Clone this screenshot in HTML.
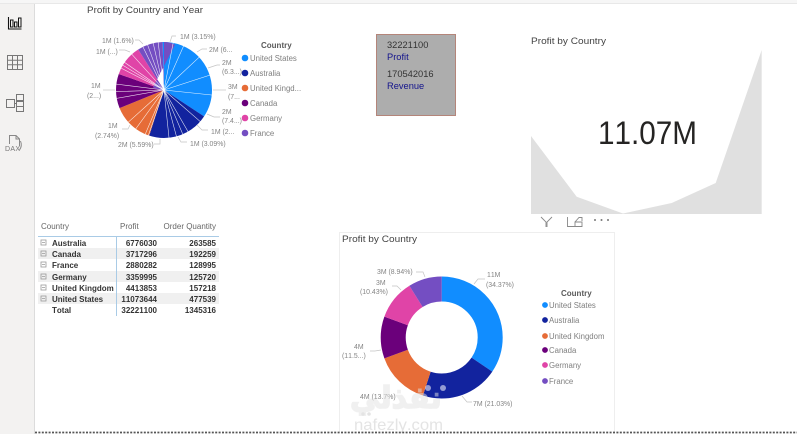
<!DOCTYPE html>
<html><head><meta charset="utf-8"><style>
html,body{margin:0;padding:0;background:#fff;width:797px;height:434px;overflow:hidden}
svg{display:block;font-family:"Liberation Sans","Noto Sans CJK SC",sans-serif;filter:blur(.3px);font-kerning:none}
.lb{font-size:6.9px;fill:#858585}
.lg{font-size:7.8px;fill:#808080}
.lh{font-size:8px;fill:#5a5a5a;font-weight:bold}
.th{font-size:8px;fill:#666}
.tb{font-size:8px;fill:#333;font-weight:bold}
.ld{stroke:#c4c4c4;stroke-width:.7;fill:none}
.ic{stroke:#666;stroke-width:1;fill:none}
.w{stroke:#fff;stroke-width:.55;stroke-opacity:.9}
</style></head><body>
<svg width="797" height="434" viewBox="0 0 797 434" xmlns="http://www.w3.org/2000/svg">
<rect width="797" height="434" fill="#fff"/>
<rect x="0" y="0" width="34" height="434" fill="#f3f2f1"/>
<rect x="34" y="0" width="1" height="434" fill="#dcdcdc"/>
<rect x="0" y="0" width="797" height="3" fill="#f6f6f6"/>
<rect x="0" y="3" width="797" height="1" fill="#e8e8e8"/>

<!-- sidebar icons -->
<g class="ic">
<path d="M8.5 17V29H21.5" stroke="#111" stroke-width="1.1"/>
<rect x="10.5" y="20" width="2.5" height="7" stroke="#111"/><rect x="14.5" y="22" width="2.5" height="5" stroke="#111"/><rect x="18.5" y="18" width="2.5" height="9" stroke="#111"/>
<rect x="7.5" y="55.5" width="15" height="14" stroke="#777"/><path d="M7.5 60.2H22.5M7.5 64.8H22.5M12.5 55.5V69.5M17.5 55.5V69.5" stroke="#777"/>
<rect x="6.5" y="99.5" width="8" height="8" stroke="#777"/><rect x="16.5" y="94.5" width="7" height="6" stroke="#777"/><rect x="16.5" y="101.5" width="7" height="5" stroke="#777"/><rect x="16.5" y="106.5" width="7" height="5" stroke="#777"/><path d="M14.5 103.5H16.5" stroke="#777"/>
<path d="M9.5 144V135.5H16L19.5 139V146" stroke="#888"/><path d="M16 135.5V139H19.5" stroke="#888"/><path d="M20.5 141Q22.5 146 19.5 150" stroke="#888"/>
</g>
<text x="5" y="151" font-size="7" fill="#777" textLength="15">DAX</text>

<!-- pie -->
<text x="87" y="13" font-size="9.5" fill="#444" textLength="116" lengthAdjust="spacingAndGlyphs">Profit by Country and Year</text>
<g transform="translate(164 90) rotate(-90)" fill="none" stroke-width="48">
<circle r="24" pathLength="360" stroke="#118dff" stroke-dasharray="124 236"/>
<circle r="24" pathLength="360" stroke="#12239e" stroke-dasharray="75 285" stroke-dashoffset="-124"/>
<circle r="24" pathLength="360" stroke="#e66c37" stroke-dasharray="50 310" stroke-dashoffset="-199"/>
<circle r="24" pathLength="360" stroke="#6b007b" stroke-dasharray="42 318" stroke-dashoffset="-249"/>
<circle r="24" pathLength="360" stroke="#e044a7" stroke-dasharray="38 322" stroke-dashoffset="-291"/>
<circle r="24" pathLength="360" stroke="#744ec2" stroke-dasharray="31 329" stroke-dashoffset="-329"/>
</g>
<g transform="translate(164 90)" class="w">
<line y2="-49" transform="rotate(11)"/><line y2="-49" transform="rotate(24)"/><line y2="-49" transform="rotate(47)"/><line y2="-49" transform="rotate(72)"/><line y2="-49" transform="rotate(96)"/>
<line y2="-49" transform="rotate(131)"/><line y2="-49" transform="rotate(150)"/><line y2="-49" transform="rotate(157)"/><line y2="-49" transform="rotate(165)"/><line y2="-49" transform="rotate(174)"/>
<line y2="-49" transform="rotate(199)"/><line y2="-49" transform="rotate(203)"/><line y2="-49" transform="rotate(216)"/><line y2="-49" transform="rotate(228)"/>
<line y2="-49" transform="rotate(260)"/><line y2="-49" transform="rotate(268)"/><line y2="-49" transform="rotate(277)"/>
<line y2="-49" transform="rotate(297)"/><line y2="-49" transform="rotate(301)"/><line y2="-49" transform="rotate(305)"/><line y2="-49" transform="rotate(318)"/>
<line y2="-49" transform="rotate(334)"/><line y2="-49" transform="rotate(340)"/><line y2="-49" transform="rotate(347)"/><line y2="-49" transform="rotate(353)"/>
</g>
<g class="ld">
<path d="M170 42L172 36H176"/><path d="M197 52L202 49H207"/><path d="M208 68L217 65H220"/><path d="M213 90H226"/><path d="M207 114L214 117H220"/><path d="M197 125L202 130H208"/><path d="M178 137L181 142H187"/><path d="M160 139V144H154"/><path d="M130 125L128 129H122"/><path d="M103 90H115"/><path d="M130 52L125 50H119"/><path d="M143 44L139 40H135"/>
</g>
<g class="lb">
<text x="180" y="39">1M (3.15%)</text><text x="209" y="52">2M (6...</text><text x="222" y="65">2M</text><text x="222" y="74">(6.3...)</text>
<text x="228" y="89">3M</text><text x="228" y="99">(7...</text><text x="222" y="114">2M</text><text x="222" y="123">(7.4...)</text><text x="211" y="134">1M (2...</text><text x="190" y="146">1M (3.09%)</text><text x="118" y="147">2M (5.59%)</text>
<text x="108" y="128">1M</text><text x="95" y="138">(2.74%)</text><text x="91" y="88">1M</text><text x="87" y="98">(2...)</text><text x="96" y="54">1M (...)</text><text x="102" y="43">1M (1.6%)</text>
</g>
<text x="261" y="48" class="lh">Country</text>
<g>
<circle cx="245" cy="58" r="3.3" fill="#118dff"/><text x="250" y="61" class="lg">United States</text>
<circle cx="245" cy="73" r="3.3" fill="#12239e"/><text x="250" y="76" class="lg">Australia</text>
<circle cx="245" cy="88" r="3.3" fill="#e66c37"/><text x="250" y="91" class="lg">United Kingd...</text>
<circle cx="245" cy="103" r="3.3" fill="#6b007b"/><text x="250" y="106" class="lg">Canada</text>
<circle cx="245" cy="118" r="3.3" fill="#e044a7"/><text x="250" y="121" class="lg">Germany</text>
<circle cx="245" cy="133" r="3.3" fill="#744ec2"/><text x="250" y="136" class="lg">France</text>
</g>

<!-- card -->
<rect x="376.5" y="34.5" width="79" height="81" fill="#adadad" stroke="#b4857a"/>
<text x="387" y="48" font-size="9.3" fill="#333">32221100</text>
<text x="387" y="60" font-size="9.3" fill="#14148c">Profit</text>
<text x="387" y="77" font-size="9.3" fill="#333">170542016</text>
<text x="387" y="89" font-size="9.3" fill="#14148c">Revenue</text>

<!-- KPI -->
<text x="531" y="44" font-size="9.5" fill="#444" textLength="75" lengthAdjust="spacingAndGlyphs">Profit by Country</text>
<path d="M531 136L576.7 196.7L623 213.5L671.7 203L715.7 183L761.7 50V214H531Z" fill="#e0e0e0"/>
<text x="598" y="144" font-size="32" fill="#252423" textLength="99" lengthAdjust="spacingAndGlyphs">11.07M</text>
<path d="M541 217L546 222V227M552 217L547 222V227" fill="none" stroke="#888" stroke-width=".9"/>
<path d="M567.5 217V226.5H582V222H575V226.5M575 222L579 217.5H582V221" fill="none" stroke="#888" stroke-width=".9"/>
<circle cx="595" cy="220" r="1" fill="#777"/><circle cx="601.5" cy="220" r="1" fill="#777"/><circle cx="608" cy="220" r="1" fill="#777"/>

<!-- table -->
<rect x="38" y="248" width="181" height="11" fill="#f0f0f0"/>
<rect x="38" y="271" width="181" height="11" fill="#f0f0f0"/>
<rect x="38" y="293" width="181" height="11" fill="#f0f0f0"/>
<rect x="38" y="236" width="181" height="1" fill="#a9cbe6"/>
<rect x="116" y="237" width="1" height="79" fill="#a9cbe6"/>
<text x="41" y="229" class="th">Country</text><text x="120" y="229" class="th">Profit</text><text x="216" y="229" class="th" text-anchor="end">Order Quantity</text>
<g fill="none" stroke="#999" stroke-width=".8">
<rect x="41" y="240" width="5" height="5"/><rect x="41" y="251" width="5" height="5"/><rect x="41" y="262" width="5" height="5"/><rect x="41" y="274" width="5" height="5"/><rect x="41" y="285" width="5" height="5"/><rect x="41" y="296" width="5" height="5"/>
<path d="M42 242.5H45M42 253.5H45M42 264.5H45M42 276.5H45M42 287.5H45M42 298.5H45"/>
</g>
<g class="tb">
<text x="52" y="246">Australia</text><text x="52" y="257">Canada</text><text x="52" y="268">France</text><text x="52" y="280">Germany</text><text x="52" y="291">United Kingdom</text><text x="52" y="302">United States</text><text x="52" y="313">Total</text>
</g>
<g class="tb" text-anchor="end">
<text x="157" y="246">6776030</text><text x="157" y="257">3717296</text><text x="157" y="268">2880282</text><text x="157" y="280">3359995</text><text x="157" y="291">4413853</text><text x="157" y="302">11073644</text><text x="157" y="313">32221100</text>
<text x="216" y="246">263585</text><text x="216" y="257">192259</text><text x="216" y="268">128995</text><text x="216" y="280">125720</text><text x="216" y="291">157218</text><text x="216" y="302">477539</text><text x="216" y="313">1345316</text>
</g>

<!-- donut -->
<path d="M339.5 432V232.5H614.5V432" fill="none" stroke="#eeeeee"/>
<text x="342" y="242" font-size="9.5" fill="#444" textLength="75" lengthAdjust="spacingAndGlyphs">Profit by Country</text>
<g transform="translate(441.7 337.5) rotate(-90)" fill="none" stroke-width="25">
<circle r="48.5" pathLength="360" stroke="#118dff" stroke-dasharray="124 236"/>
<circle r="48.5" pathLength="360" stroke="#12239e" stroke-dasharray="74 286" stroke-dashoffset="-124"/>
<circle r="48.5" pathLength="360" stroke="#e66c37" stroke-dasharray="52 308" stroke-dashoffset="-198"/>
<circle r="48.5" pathLength="360" stroke="#6b007b" stroke-dasharray="40 320" stroke-dashoffset="-250"/>
<circle r="48.5" pathLength="360" stroke="#e044a7" stroke-dasharray="38 322" stroke-dashoffset="-290"/>
<circle r="48.5" pathLength="360" stroke="#744ec2" stroke-dasharray="32 328" stroke-dashoffset="-328"/>
</g>
<g class="ld">
<path d="M474 284L478 279H485"/><path d="M462 396L467 402H472"/><path d="M381 350L375 351H370"/><path d="M401 290L397 286H392"/><path d="M425 277L423 272H416"/>
</g>
<g class="lb">
<text x="487" y="277">11M</text><text x="486" y="287">(34.37%)</text><text x="473" y="406">7M (21.03%)</text><text x="354" y="349">4M</text><text x="342" y="358">(11.5...)</text>
<text x="376" y="285">3M</text><text x="360" y="294">(10.43%)</text><text x="377" y="274">3M (8.94%)</text><text x="360" y="399">4M (13.7%)</text>
</g>
<text x="561" y="296" class="lh">Country</text>
<g>
<circle cx="545" cy="305" r="2.9" fill="#118dff"/><text x="549" y="308" class="lg">United States</text>
<circle cx="545" cy="320" r="2.9" fill="#12239e"/><text x="549" y="323" class="lg">Australia</text>
<circle cx="545" cy="336" r="2.9" fill="#e66c37"/><text x="549" y="339" class="lg">United Kingdom</text>
<circle cx="545" cy="350" r="2.9" fill="#6b007b"/><text x="549" y="353" class="lg">Canada</text>
<circle cx="545" cy="365" r="2.9" fill="#e044a7"/><text x="549" y="368" class="lg">Germany</text>
<circle cx="545" cy="381" r="2.9" fill="#744ec2"/><text x="549" y="384" class="lg">France</text>
</g>

<!-- watermark -->
<text x="350" y="408" font-size="30" font-weight="bold" fill="#e2e2e2" stroke="#e2e2e2" stroke-width="1.5" opacity=".5" font-family="'DejaVu Sans',sans-serif">نفذلي</text>
<circle cx="428" cy="388" r="3" fill="#fff" opacity=".55"/><circle cx="443" cy="388" r="3" fill="#fff" opacity=".55"/>
<circle cx="363" cy="414" r="1.8" fill="#e4e4e4"/><circle cx="369" cy="414" r="1.8" fill="#e4e4e4"/>
<text x="354" y="430" font-size="16" fill="#e4e4e4" textLength="89" lengthAdjust="spacingAndGlyphs">nafezly.com</text>

<line x1="35" y1="432.5" x2="797" y2="432.5" stroke="#555" stroke-width="1.8" stroke-dasharray="2 1.4"/>
</svg>
</body></html>
